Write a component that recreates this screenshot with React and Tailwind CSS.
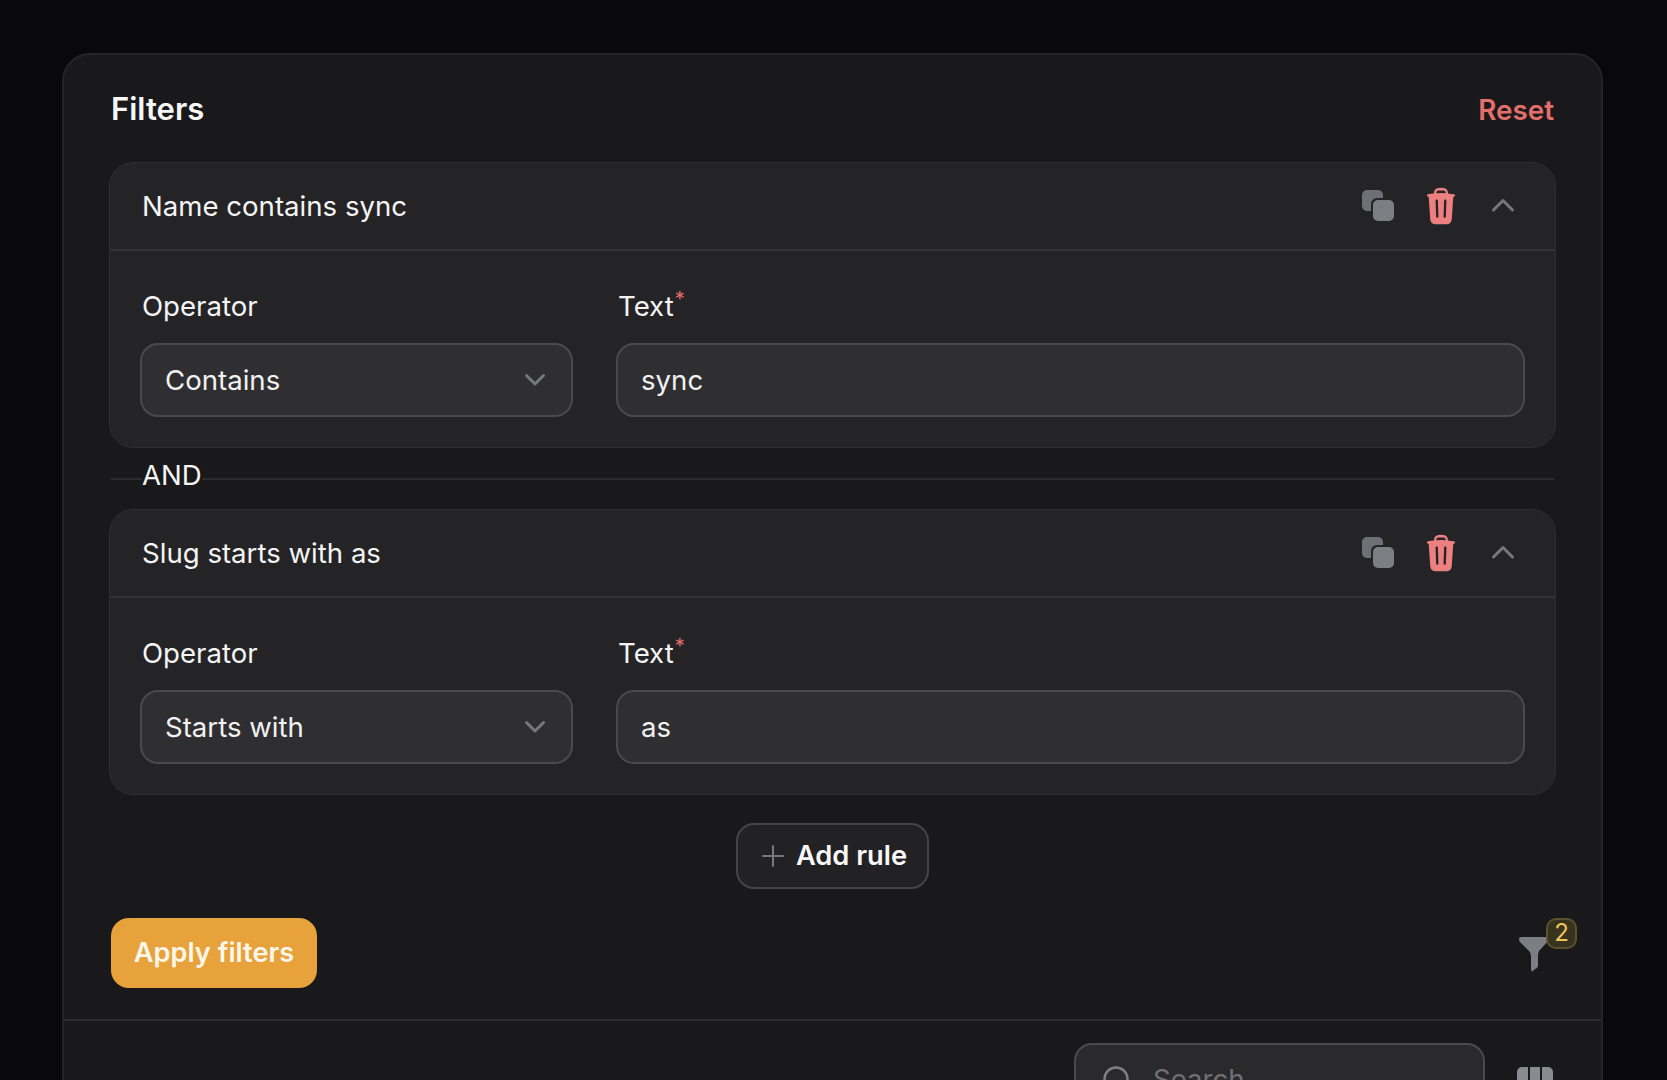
import React from "react";

function CopyIcon() {
    return (
        <svg width="36" height="36" viewBox="0 0 36 36" className="mr-[2px] shrink-0">
            <rect x="3" y="2" width="21" height="21" rx="5" fill="#6f7075" />
            <rect x="12" y="10" width="24" height="24" rx="6" fill="#242426" />
            <rect x="14" y="12" width="21" height="21" rx="5" fill="#7d7e83" />
        </svg>
    );
}

function TrashIcon() {
    return (
        <svg width="28" height="38" viewBox="3 1 18 22" className="shrink-0" preserveAspectRatio="none">
            <path
                fill="#ec7f7f"
                fillRule="evenodd"
                clipRule="evenodd"
                d="M16.5 4.478v.227a48.816 48.816 0 0 1 3.878.512.75.75 0 1 1-.256 1.478l-.209-.035-1.005 13.07a3 3 0 0 1-2.991 2.77H8.084a3 3 0 0 1-2.991-2.77L4.087 6.66l-.209.035a.75.75 0 0 1-.256-1.478A48.567 48.567 0 0 1 7.5 4.705v-.227c0-1.564 1.213-2.9 2.816-2.951a52.662 52.662 0 0 1 3.369 0c1.603.051 2.815 1.387 2.815 2.951Zm-6.136-1.452a51.196 51.196 0 0 1 3.273 0C14.39 3.05 15 3.684 15 4.478v.113a49.488 49.488 0 0 0-6 0v-.113c0-.794.609-1.428 1.364-1.452Zm-.355 5.945a.75.75 0 1 0-1.5.058l.347 9a.75.75 0 1 0 1.499-.058l-.346-9Zm5.48.058a.75.75 0 1 0-1.498-.058l-.347 9a.75.75 0 0 0 1.5.058l.345-9Z"
            />
        </svg>
    );
}

function ChevronUp() {
    return (
        <svg width="36" height="36" viewBox="0 0 36 36" className="shrink-0" fill="none">
            <path d="M8.5 22 L18 12.5 L27.5 22" stroke="#77787c" strokeWidth="3" strokeLinecap="round" strokeLinejoin="round" />
        </svg>
    );
}

function ChevronDown() {
    return (
        <svg width="26" height="26" viewBox="0 0 26 26" fill="none" className="shrink-0">
            <path d="M4.5 8.5 L13 17 L21.5 8.5" stroke="#77787c" strokeWidth="3" strokeLinecap="round" strokeLinejoin="round" />
        </svg>
    );
}

function RuleCard({ title, operator, value }) {
    return (
        <div className="rounded-[24px] border border-[#2e2e31] bg-[#242426]">
            <div className="flex h-[88px] items-center justify-between border-b-2 border-[#343437] pl-[32px] pr-[34px]">
                <span className="text-[27.6px] leading-[36px] text-[#f4f4f5]">{title}</span>
                <div className="flex items-center gap-[30px]">
                    <CopyIcon />
                    <TrashIcon />
                    <ChevronUp />
                </div>
            </div>
            <div className="px-[30px] pb-[30px] pt-[37px]">
                <div className="flex gap-[43px]">
                    <div className="w-[433px] shrink-0">
                        <div className="mb-[19px] pl-[2px] text-[27.6px] leading-[36px] text-[#f4f4f5]">Operator</div>
                        <div className="flex h-[74px] items-center justify-between rounded-[18px] border-2 border-[#4a4a4d] bg-[#2f2f31] pl-[23px] pr-[23px]">
                            <span className="pt-[1px] text-[27.6px] text-[#f1f1f2]">{operator}</span>
                            <ChevronDown />
                        </div>
                    </div>
                    <div className="flex-1">
                        <div className="mb-[19px] pl-[2px] text-[27.6px] leading-[36px] text-[#f4f4f5]">
                            Text<sup className="ml-[1px] text-[20px] leading-none text-[#e46d6d]">*</sup>
                        </div>
                        <div className="flex h-[74px] items-center rounded-[18px] border-2 border-[#4a4a4d] bg-[#2f2f31] px-[23px]">
                            <span className="pt-[1px] text-[27.6px] text-[#f1f1f2]">{value}</span>
                        </div>
                    </div>
                </div>
            </div>
        </div>
    );
}

export default function App() {
    return (
        <div className="h-[1080px] overflow-hidden bg-[#09090c] pl-[62px] pt-[53px] font-['Inter',sans-serif] tracking-normal">
            <div className="h-[1200px] w-[1541px] rounded-t-[28px] border-2 border-[#252528] bg-[#19191b]">
                <div className="px-[45px] pt-[35px]">
                    <div className="mb-[36px] flex h-[36px] items-center justify-between pl-[2px] pr-[2px]">
                        <h2 className="mt-[3px] text-[31px] font-semibold text-[#f7f7f8]">Filters</h2>
                        <button className="mt-[6px] text-[27.8px] font-semibold text-[#e36f6b]">Reset</button>
                    </div>

                    <RuleCard title="Name contains sync" operator="Contains" value="sync" />

                    <div className="mx-[2px] flex h-[61px] items-center">
                        <div className="h-[2px] w-[31px] bg-[#2c2c2f]" />
                        <span className="mb-[7px] text-[27.6px] leading-[36px] text-[#f4f4f5]">AND</span>
                        <div className="h-[2px] flex-1 bg-[#2c2c2f]" />
                    </div>

                    <RuleCard title="Slug starts with as" operator="Starts with" value="as" />

                    <div className="mt-[28px] flex justify-center">
                        <button className="flex h-[66px] w-[193px] items-center justify-center gap-[11px] rounded-[18px] border-2 border-[#444447] bg-[#222224] pl-[3px]">
                            <svg width="24" height="24" viewBox="0 0 24 24" fill="none">
                                <path d="M12 2 V22 M2 12 H22" stroke="#77787c" strokeWidth="2" strokeLinecap="round" />
                            </svg>
                            <span className="text-[27.3px] font-semibold text-[#f7f7f8]">Add rule</span>
                        </button>
                    </div>

                    <div className="mt-[29px] flex items-center justify-between pl-[2px]">
                        <button className="flex h-[70px] w-[206px] items-center justify-center rounded-[18px] bg-[#e8a23c] text-[27.2px] font-semibold text-[#fdf6ea]">
                            Apply filters
                        </button>
                        <div className="relative mr-[6px] mt-[1px] h-[36px] w-[32px]">
                            <svg width="32" height="36" viewBox="0 0 32 36">
                                <path
                                    fill="#7d7e83"
                                    d="M1 3 Q1 1 3 1 H29 Q32 1 31 4 L21 15 Q20 17 20 20 V29 Q20 32 17 33 L15 35 Q13 36 13 33 V20 Q13 17 11 15 L2 6 Q1 5 1 3Z"
                                />
                            </svg>
                            <span className="absolute left-[28px] top-[-18px] flex h-[31px] w-[31px] items-center justify-center rounded-[10px] border-2 border-[#5b5030] bg-[#38331f] text-[24px] text-[#efc558]">
                                2
                            </span>
                        </div>
                    </div>
                </div>

                <div className="mt-[31px] h-[2px] bg-[#2c2c2f]" />

                <div className="flex justify-end gap-[32px] pr-[48px] pt-[22px]">
                    <div className="flex h-[74px] w-[411px] items-center gap-[22px] rounded-[18px] border-2 border-[#4a4a4d] bg-[#2a2a2c] pl-[27px]">
                        <svg width="28" height="28" viewBox="0 0 28 28" fill="none" className="shrink-0">
                            <circle cx="13" cy="13" r="11.5" stroke="#7d7e83" strokeWidth="2.5" />
                            <path d="M22 22 L27 27" stroke="#7d7e83" strokeWidth="2.5" strokeLinecap="round" />
                        </svg>
                        <span className="text-[27.6px] text-[#6f7075]">Search</span>
                    </div>
                    <div className="mt-[24px] flex h-[30px] gap-[2px] overflow-hidden rounded-t-[5px]">
                        <div className="w-[11px] bg-[#8a8b90]" />
                        <div className="w-[10px] bg-[#8a8b90]" />
                        <div className="w-[11px] bg-[#8a8b90]" />
                    </div>
                </div>
            </div>
        </div>
    );
}
